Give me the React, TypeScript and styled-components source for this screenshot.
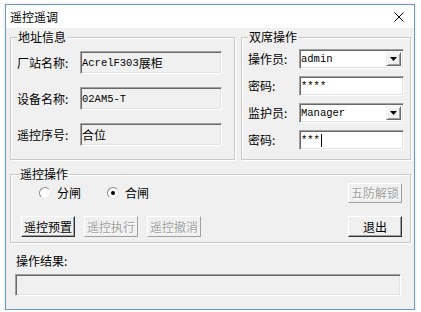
import React from "react";
import styled, { createGlobalStyle } from "styled-components";

const GlobalStyle = createGlobalStyle`
  html, body { margin: 0; padding: 0; background: #fff; }
  body {
    font-family: "Noto Sans CJK SC", "Microsoft YaHei", sans-serif;
    font-size: 12px;
    color: #000;
  }
  * { box-sizing: border-box; }
`;

const Window = styled.div`
  margin: 4px 0 0 5px;
  width: 410px;
  height: 306px;
  border: 1px solid #6a98c4;
  background: #f0f0f0;
  display: flex;
  flex-direction: column;
  box-shadow: 0 0 3px rgba(0, 0, 0, 0.12);
`;

const TitleBar = styled.div`
  flex: none;
  height: 23px;
  background: #fff;
  display: flex;
  align-items: center;
  justify-content: space-between;
  padding: 0 10px 0 4px;
`;

const Title = styled.span`
  font-size: 12px;
  line-height: 16px;
`;

const Body = styled.div`
  flex: 1;
  display: flex;
  flex-direction: column;
  padding: 1px 3px 0 4px;
`;

const TopRow = styled.div`
  display: flex;
  gap: 6px;
`;

const Group = styled.fieldset<{ $w?: number; $pad: string; $mt?: number }>`
  margin: ${(p) => p.$mt ?? 0}px 0 0 0;
  min-width: 0;
  ${(p) => (p.$w ? `width: ${p.$w}px; flex: none;` : "")}
  border: 1px solid #c9c9c9;
  box-shadow: inset 1px 1px 0 #fff, 1px 1px 0 #fff;
  padding: ${(p) => p.$pad};
`;

const Legend = styled.legend<{ $shift?: number }>`
  padding: 0 1px;
  margin-left: ${(p) => p.$shift ?? 0}px;
  font-size: 12px;
  line-height: 16px;
  background: #f0f0f0;
`;

const Rows = styled.div<{ $gap: number }>`
  display: flex;
  flex-direction: column;
  gap: ${(p) => p.$gap}px;
`;

const Row = styled.div`
  display: flex;
  align-items: center;
`;

const Label = styled.span<{ $w: number }>`
  width: ${(p) => p.$w}px;
  flex: none;
  line-height: 16px;
  white-space: nowrap;
`;

const Sunken = styled.div<{ $w: number; $h: number; $white?: boolean }>`
  width: ${(p) => p.$w}px;
  height: ${(p) => p.$h}px;
  flex: none;
  border: 1px solid;
  border-color: #a0a0a0 #fff #fff #a0a0a0;
  box-shadow: inset 1px 1px 0 #696969, inset -1px -1px 0 #e3e3e3;
  background: ${(p) => (p.$white ? "#fff" : "#f0f0f0")};
  display: flex;
  align-items: center;
  padding: 0 2px 0 1px;
  overflow: hidden;
  white-space: nowrap;
`;

const Mono = styled.span`
  font-family: "Liberation Mono", "DejaVu Sans Mono", monospace;
  font-size: 10.5px;
  line-height: 14px;
`;

const Cjk = styled.span`
  font-family: "Noto Sans CJK SC", sans-serif;
  font-size: 12px;
  line-height: 16px;
`;

const Caret = styled.span`
  display: inline-block;
  width: 1px;
  height: 13px;
  background: #000;
  margin-left: 1px;
`;

const ComboText = styled.div`
  flex: 1;
  display: flex;
  align-items: center;
`;

const DropBtn = styled.div`
  width: 15px;
  height: 14px;
  flex: none;
  background: #f0f0f0;
  border: 1px solid;
  border-color: #f0f0f0 #696969 #696969 #f0f0f0;
  box-shadow: inset 1px 1px 0 #fff, inset -1px -1px 0 #a0a0a0;
  display: flex;
  align-items: center;
  justify-content: center;
`;

const OpsBody = styled.div`
  display: flex;
  justify-content: space-between;
`;

const Column = styled.div<{ $gap: number }>`
  display: flex;
  flex-direction: column;
  gap: ${(p) => p.$gap}px;
`;

const RadioRow = styled.div`
  height: 20px;
  display: flex;
  align-items: center;
  gap: 26px;
  padding-left: 18px;
`;

const RadioItem = styled.label`
  display: flex;
  align-items: center;
  gap: 6px;
  line-height: 16px;
`;

const RadioCircle = styled.span<{ $on?: boolean }>`
  width: 12px;
  height: 12px;
  border-radius: 50%;
  border: 1px solid;
  border-color: #8a8a8a #e8e8e8 #e8e8e8 #8a8a8a;
  background: #fff;
  display: flex;
  align-items: center;
  justify-content: center;
  &::after {
    content: "";
    width: 4px;
    height: 4px;
    border-radius: 50%;
    background: ${(p) => (p.$on ? "#000" : "transparent")};
  }
`;

const ButtonRow = styled.div`
  display: flex;
  gap: 9px;
`;

const Btn = styled.button<{ $h?: number }>`
  width: 54px;
  height: ${(p) => p.$h ?? 21}px;
  padding: 0;
  margin: 0;
  font-family: "Noto Sans CJK SC", sans-serif;
  font-size: 12px;
  line-height: 16px;
  background: #f0f0f0;
  color: #000;
  border: 1px solid;
  border-color: #fff #303030 #303030 #fff;
  box-shadow: inset -1px -1px 0 #a0a0a0;
  &:disabled {
    color: #a0a0a0;
    text-shadow: 1px 1px 0 #fff;
    border-color: #fff #a0a0a0 #a0a0a0 #fff;
    box-shadow: none;
  }
`;

const ResultLabel = styled.div`
  margin: 10px 0 0 6px;
  line-height: 16px;
`;

const ResultWrap = styled.div`
  margin: 5px 0 0 5px;
`;

const CloseIcon = () => (
  <svg width="10" height="10" viewBox="0 0 10 10">
    <path d="M0.5 0.5 L9.5 9.5 M9.5 0.5 L0.5 9.5" stroke="#000" strokeWidth="1" />
  </svg>
);

const Arrow = () => (
  <svg width="7" height="4" viewBox="0 0 7 4">
    <path d="M0 0 H7 L3.5 4 Z" fill="#000" />
  </svg>
);

export default function App() {
  return (
    <>
      <GlobalStyle />
      <Window>
        <TitleBar>
          <Title>遥控遥调</Title>
          <CloseIcon />
        </TitleBar>
        <Body>
          <TopRow>
            <Group $w={225} $pad="6px 11px 12px 6px">
              <Legend>地址信息</Legend>
              <Rows $gap={13}>
                <Row>
                  <Label $w={63}>厂站名称:</Label>
                  <Sunken $w={142} $h={23}>
                    <Mono>AcrelF303</Mono>
                    <Cjk>展柜</Cjk>
                  </Sunken>
                </Row>
                <Row>
                  <Label $w={63}>设备名称:</Label>
                  <Sunken $w={142} $h={23}>
                    <Mono>02AM5-T</Mono>
                  </Sunken>
                </Row>
                <Row>
                  <Label $w={63}>遥控序号:</Label>
                  <Sunken $w={142} $h={23}>
                    <Cjk>合位</Cjk>
                  </Sunken>
                </Row>
              </Rows>
            </Group>
            <Group $w={170} $pad="4px 5px 9px 6px">
              <Legend>双席操作</Legend>
              <Rows $gap={7}>
                <Row>
                  <Label $w={51}>操作员:</Label>
                  <Sunken $w={105} $h={20} $white>
                    <ComboText>
                      <Mono>admin</Mono>
                    </ComboText>
                    <DropBtn>
                      <Arrow />
                    </DropBtn>
                  </Sunken>
                </Row>
                <Row>
                  <Label $w={51}>密码:</Label>
                  <Sunken $w={105} $h={20} $white>
                    <Mono>****</Mono>
                  </Sunken>
                </Row>
                <Row>
                  <Label $w={51}>监护员:</Label>
                  <Sunken $w={105} $h={20} $white>
                    <ComboText>
                      <Mono>Manager</Mono>
                    </ComboText>
                    <DropBtn>
                      <Arrow />
                    </DropBtn>
                  </Sunken>
                </Row>
                <Row>
                  <Label $w={51}>密码:</Label>
                  <Sunken $w={105} $h={20} $white>
                    <Mono>***</Mono>
                    <Caret />
                  </Sunken>
                </Row>
              </Rows>
            </Group>
          </TopRow>
          <Group $pad="1px 8px 5px 10px" $mt={6}>
            <Legend $shift={-2}>遥控操作</Legend>
            <OpsBody>
              <Column $gap={13}>
                <RadioRow>
                  <RadioItem>
                    <RadioCircle />
                    分闸
                  </RadioItem>
                  <RadioItem>
                    <RadioCircle $on />
                    合闸
                  </RadioItem>
                </RadioRow>
                <ButtonRow>
                  <Btn>遥控预置</Btn>
                  <Btn disabled>遥控执行</Btn>
                  <Btn disabled>遥控撤消</Btn>
                </ButtonRow>
              </Column>
              <Column $gap={13}>
                <Btn $h={20} disabled>
                  五防解锁
                </Btn>
                <Btn>退出</Btn>
              </Column>
            </OpsBody>
          </Group>
          <ResultLabel>操作结果:</ResultLabel>
          <ResultWrap>
            <Sunken $w={386} $h={22} />
          </ResultWrap>
        </Body>
      </Window>
    </>
  );
}
